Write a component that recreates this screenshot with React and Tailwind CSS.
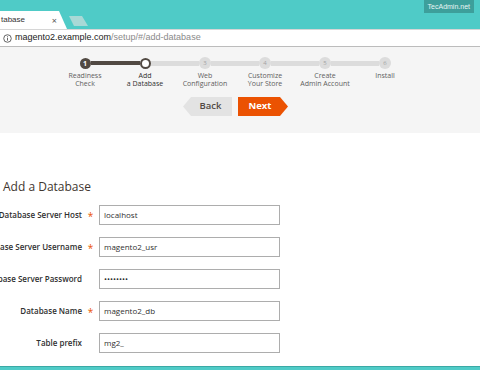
import React from "react";

const steps = [
  { n: "1", label: ["Readiness", "Check"], state: "done" },
  { n: "2", label: ["Add", "a Database"], state: "active" },
  { n: "3", label: ["Web", "Configuration"], state: "todo" },
  { n: "4", label: ["Customize", "Your Store"], state: "todo" },
  { n: "5", label: ["Create", "Admin Account"], state: "todo" },
  { n: "6", label: ["Install"], state: "todo" },
];

const fields = [
  { label: "Database Server Host", value: "localhost", req: true },
  { label: "Database Server Username", value: "magento2_usr", req: true },
  { label: "Database Server Password", value: "••••••••", req: false },
  { label: "Database Name", value: "magento2_db", req: true },
  { label: "Table prefix", value: "mg2_", req: false },
];

function Step({ step, index }) {
  const leftDark = index <= 1;
  const rightDark = index === 0;
  let circle;
  if (step.state === "done") {
    circle = (
      <div className="w-[11px] h-[11px] rounded-full bg-[#514943] flex items-center justify-center text-[7px] leading-none font-bold text-white">
        {step.n}
      </div>
    );
  } else if (step.state === "active") {
    circle = <div className="w-[11px] h-[11px] rounded-full bg-white border-[2px] border-[#514943]" />;
  } else {
    circle = (
      <div className="w-[12px] h-[12px] rounded-full bg-[#dcdcdc] flex items-center justify-center text-[6px] leading-none text-[#a3a3a3]">
        {step.n}
      </div>
    );
  }
  return (
    <div className="w-[60px] flex flex-col items-center">
      <div className="w-full h-[12px] flex items-center">
        <div
          className={
            index === 0
              ? "flex-1"
              : leftDark
              ? "flex-1 h-[4px] bg-[#514943]"
              : "flex-1 h-[5px] bg-[#dcdcdc]"
          }
        />
        {circle}
        <div
          className={
            index === 5
              ? "flex-1"
              : rightDark
              ? "flex-1 h-[4px] bg-[#514943]"
              : "flex-1 h-[5px] bg-[#dcdcdc]"
          }
        />
      </div>
      <div
        className={
          "mt-[3px] text-center text-[7px] leading-[8px] whitespace-nowrap " +
          (step.state === "active" ? "text-[#303030]" : "text-[#5e5e5e]")
        }
      >
        {step.label.map((l) => (
          <div key={l}>{l}</div>
        ))}
      </div>
    </div>
  );
}

export default function App() {
  return (
    <div className="w-[480px] h-[370px] overflow-hidden bg-white flex flex-col font-['Open_Sans',sans-serif]">
      {/* browser tab strip */}
      <div className="h-[29px] bg-[#4fcbc7] relative flex items-end shrink-0">
        <div className="w-[67px] h-[18px] bg-white [clip-path:polygon(0_0,59px_0,67px_100%,0_100%)] flex items-center pl-[1px] pr-[10px] justify-between">
          <span className="text-[8px] text-[#333] font-['Liberation_Sans',sans-serif]">tabase</span>
          <span className="text-[9px] text-[#555] leading-none">×</span>
        </div>
        <div className="ml-[2px] mb-[3px] w-[19px] h-[10px] bg-[#a8d9d6] [clip-path:polygon(0_0,13px_0,19px_100%,5px_100%)]" />
        <div className="absolute right-[6px] top-0 h-[13px] px-[4px] bg-[#3d9f9b] text-[7px] leading-[13px] text-[#e8f5f4] font-['Liberation_Sans',sans-serif]">
          TecAdmin.net
        </div>
      </div>
      {/* address bar */}
      <div className="h-[18px] bg-white border-t border-[#d6d6d6] border-b border-b-[#bdbdbd] flex items-center pl-[3px] shrink-0 font-['Liberation_Sans',sans-serif]">
        <svg width="9" height="9" viewBox="0 0 10 10" className="mr-[3px]">
          <circle cx="5" cy="5" r="4.2" fill="none" stroke="#555" strokeWidth="1" />
          <rect x="4.5" y="4.2" width="1" height="3.2" fill="#555" />
          <rect x="4.5" y="2.5" width="1" height="1" fill="#555" />
        </svg>
        <span className="text-[9px] text-[#222]">magento2.example.com</span>
        <span className="text-[9px] text-[#8a8a8a]">/setup/#/add-database</span>
      </div>
      {/* wizard header */}
      <div className="h-[86px] bg-[#f5f5f5] shadow-[0_1px_2px_rgba(0,0,0,0.08)] shrink-0 pt-[10px]">
        <div className="flex pl-[55px]">
          {steps.map((s, i) => (
            <Step key={s.n} step={s} index={i} />
          ))}
        </div>
        <div className="flex pl-[183px] gap-[6px] mt-[9px]">
          <div className="w-[49px] h-[19px] bg-[#e3e3e3] [clip-path:polygon(8px_0,100%_0,100%_100%,8px_100%,0_50%)] flex items-center justify-center pl-[6px] text-[9.5px] font-semibold text-[#514943]">
            Back
          </div>
          <div className="w-[50px] h-[19px] bg-[#eb5202] [clip-path:polygon(0_0,42px_0,50px_50%,42px_100%,0_100%)] flex items-center justify-center pr-[6px] text-[9.5px] font-bold text-white">
            Next
          </div>
        </div>
      </div>
      {/* form */}
      <div className="flex-1 bg-white">
        <h1 className="mt-[46px] pl-[3px] text-[12px] leading-[16px] text-[#41362f]">Add a Database</h1>
        <div className="mt-[10px] flex flex-col gap-[12px]">
          {fields.map((f) => (
            <div key={f.label} className="flex items-center h-[20px]">
              <div className="w-[82px] flex justify-end whitespace-nowrap text-[8px] font-semibold text-[#303030]">
                <span>{f.label}</span>
              </div>
              <div className="w-[17px] flex justify-center text-[10px] leading-none pt-[2px] text-[#eb5202]">{f.req ? "*" : ""}</div>
              <div className="w-[181px] h-[20px] border border-[#adadad] flex items-center pl-[4px] text-[8px] text-[#303030]">
                <span>{f.value}</span>
              </div>
            </div>
          ))}
        </div>
      </div>
      {/* bottom teal strip */}
      <div className="h-[4px] bg-[#4fcbc7] border-t border-[#3aa9a5] shrink-0" />
    </div>
  );
}
